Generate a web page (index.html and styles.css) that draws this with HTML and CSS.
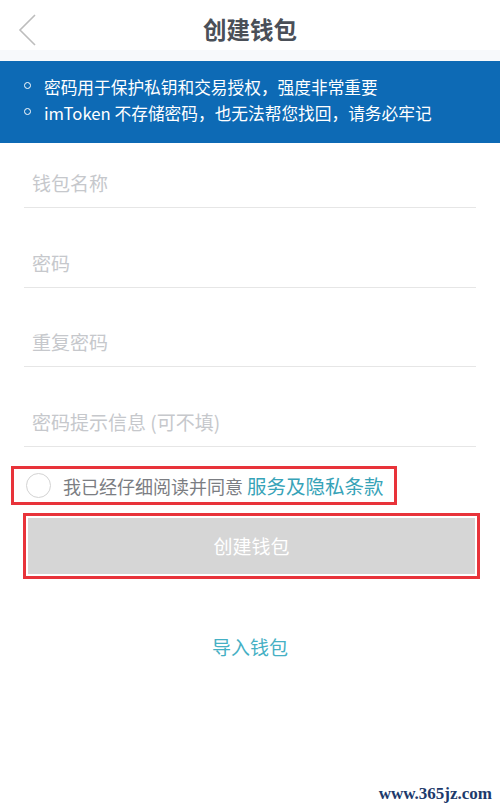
FILE: index.html
```html
<!DOCTYPE html>
<html lang="zh-CN">
<head>
<meta charset="utf-8">
<link rel="stylesheet" href="styles.css">
</head>
<body>
<div class="page">
  <header class="topbar">
    <svg class="back" width="20" height="34" viewBox="0 0 20 34"><path d="M18 2 L3 17 L18 32" fill="none" stroke="#bdbdbd" stroke-width="1.6"/></svg>
    <h1 class="title">创建钱包</h1>
  </header>
  <div class="band"></div>
  <div class="notice">
    <div class="notice-row"><span class="dot"></span><span>密码用于保护私钥和交易授权，强度非常重要</span></div>
    <div class="notice-row"><span class="dot"></span><span>imToken 不存储密码，也无法帮您找回，请务必牢记</span></div>
  </div>
  <div class="form">
    <div class="field"><span class="ph">钱包名称</span></div>
    <div class="field"><span class="ph">密码</span></div>
    <div class="field"><span class="ph">重复密码</span></div>
    <div class="field"><span class="ph">密码提示信息 (可不填)</span></div>
  </div>
  <div class="agree">
    <span class="radio"></span>
    <span class="agree-text">我已经仔细阅读并同意 <span class="link">服务及隐私条款</span></span>
  </div>
  <div class="btn-wrap">
    <div class="btn">创建钱包</div>
  </div>
  <div class="import">导入钱包</div>
  <div class="footer">
    <span class="wm">www.365jz.com</span>
  </div>
</div>
</body>
</html>
```

FILE: styles.css
```css
* { box-sizing: border-box; }
html, body { margin: 0; padding: 0; background: #fff; }
body {
  font-family: "Noto Sans CJK SC", "Noto Sans", sans-serif;
  width: 500px;
  height: 812px;
  overflow: hidden;
}
.page { display: flex; flex-direction: column; height: 812px; }
.topbar {
  height: 50px;
  display: flex;
  align-items: center;
  justify-content: center;
  position: relative;
}
.back { position: absolute; left: 17px; top: 13px; }
.title {
  margin: 0;
  font-size: 23.5px;
  font-weight: 700;
  color: #4a4f58;
  line-height: 1;
  padding-top: 9px;
}
.band { height: 11px; background: #f7f9fb; }
.notice {
  background: #0d6ab5;
  height: 82px;
  padding: 14px 0 0 22px;
  display: flex;
  flex-direction: column;
  gap: 2px;
  color: #ffffff;
  font-size: 16.7px;
  line-height: 24px;
}
.notice-row { display: flex; align-items: center; }
.dot {
  width: 7px; height: 7px;
  border: 1.6px solid #fff;
  border-radius: 50%;
  margin-right: 13px;
  margin-left: 2px;
  margin-top: -4px;
}
.form { padding: 0 24px; }
.field {
  height: 79.5px;
  border-bottom: 1px solid #e6e6e6;
  display: flex;
  align-items: flex-end;
  padding: 0 0 11px 8px;
}
.field:first-child { height: 65px; }
.ph { font-size: 19px; color: #c6c8cc; line-height: 26px; }
.agree {
  margin: 19px 0 0 11px;
  width: 386px;
  height: 39px;
  border: 3px solid #e8333a;
  display: flex;
  align-items: center;
  padding-left: 12px;
}
.radio {
  width: 25px; height: 25px;
  border: 1px solid #d3d3d3;
  border-radius: 50%;
  margin-right: 12px;
  flex: none;
}
.agree-text { font-size: 18px; color: #7b7d82; white-space: nowrap; }
.link { color: #37a3b8; font-size: 19.5px; }
.btn-wrap {
  margin: 8px 0 0 23px;
  width: 457px;
  height: 66px;
  border: 3px solid #e8333a;
  padding: 2px;
}
.btn {
  height: 100%;
  background: #d6d6d6;
  color: #ffffff;
  font-size: 19px;
  display: flex;
  align-items: center;
  justify-content: center;
}
.import {
  margin-top: 56px;
  text-align: center;
  color: #45b0c4;
  font-size: 19px;
  line-height: 24px;
}
.footer {
  margin-top: auto;
  display: flex;
  justify-content: flex-end;
  padding: 0 8px 8px 0;
}
.wm {
  font-family: "Liberation Serif", "DejaVu Serif", serif;
  font-size: 17px;
  font-weight: 700;
  color: #1d3a6b;
}
```
